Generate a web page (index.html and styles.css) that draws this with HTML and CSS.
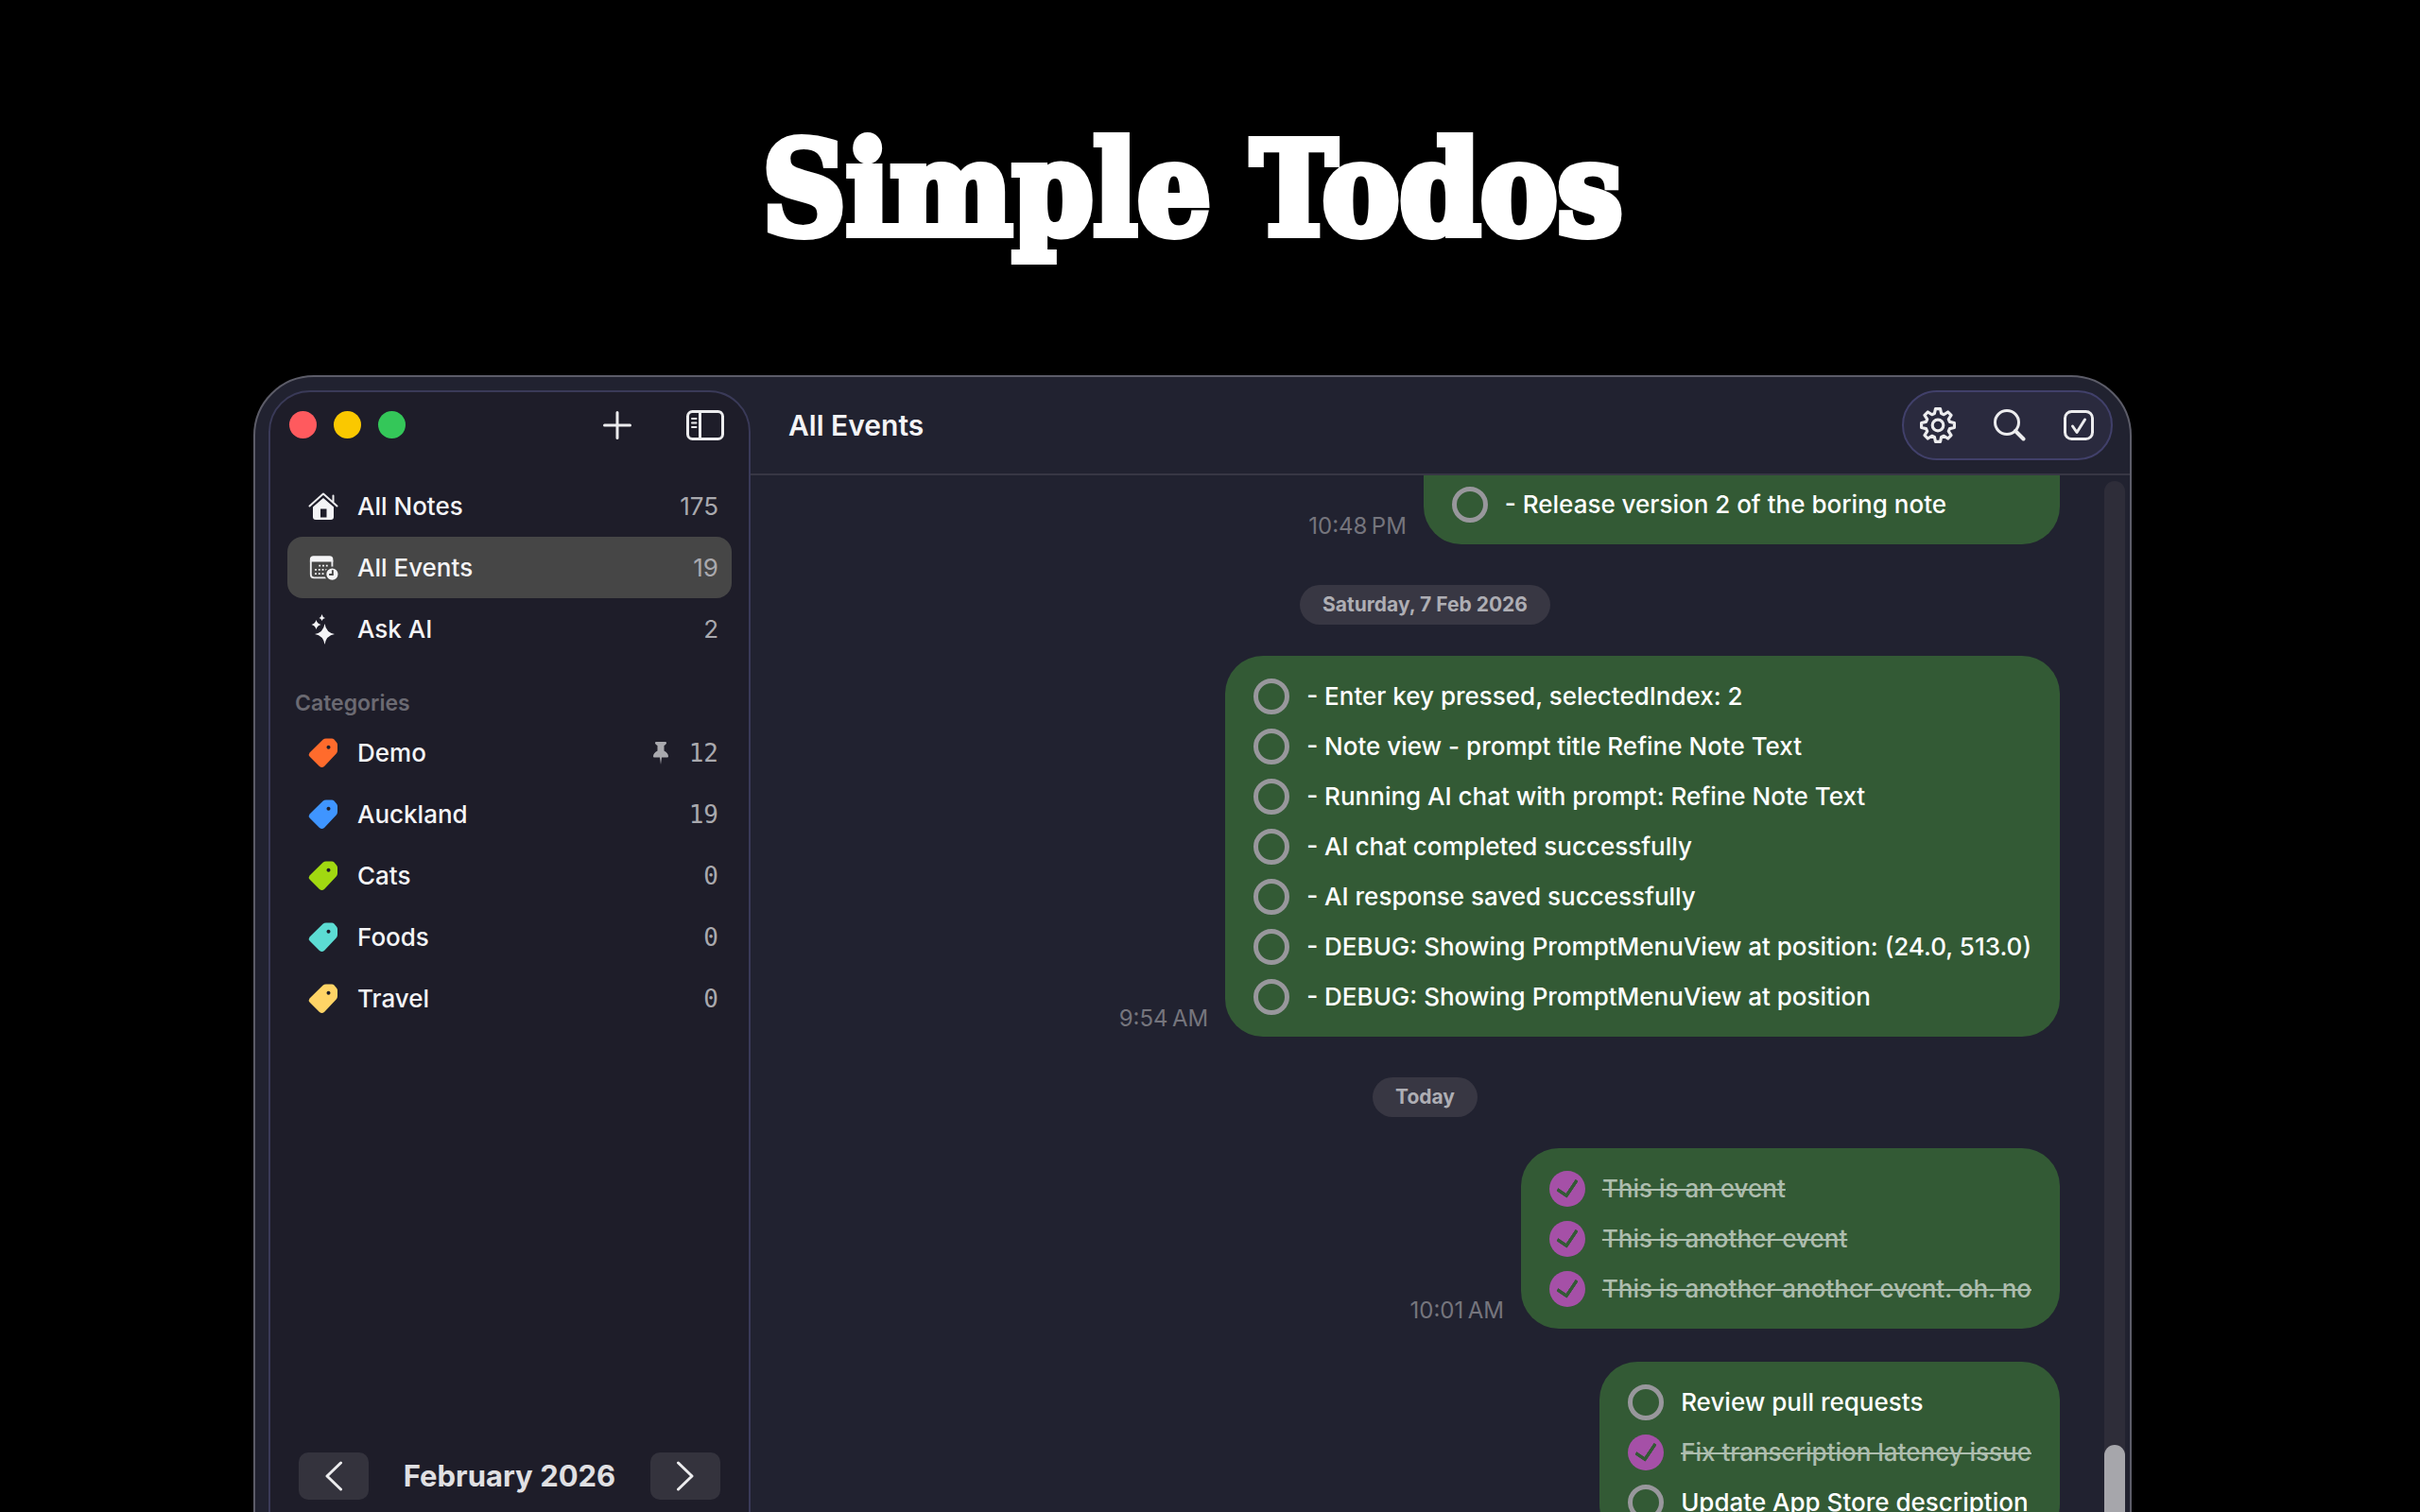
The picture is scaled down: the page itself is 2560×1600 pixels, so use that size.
FILE: index.html
```html
<!DOCTYPE html>
<html lang="en">
<head>
<meta charset="utf-8">
<title>Simple Todos</title>
<link rel="stylesheet" href="styles.css">
</head>
<body>
<svg class="sprite" aria-hidden="true">
  <symbol id="tag" viewBox="0 0 32 32"><path fill-rule="evenodd" d="M15.500 1.800Q17 .5 19 .5H25Q26.500 .5 27.500 1.500L30 4.500Q31 5.500 31 7V13Q31 15 29.700 16.500L17 30Q14.500 32 12 30L1.500 19.500Q0 17.500 1.500 15.500ZM21.500 7.800a2 2 0 1 0 .01 0Z"/></symbol>
</svg>
<header class="hero"><h1>Simple Todos</h1></header>
<div class="window">
  <aside class="sidebar">
    <div class="titlebar">
      <div class="lights"><button class="light red" aria-label="Close"></button><button class="light yellow" aria-label="Minimize"></button><button class="light green" aria-label="Zoom"></button></div>
      <div class="tools">
        <button aria-label="New note"><svg width="30" height="30" viewBox="0 0 30 30"><path class="line" d="M15 1.500V28.500M1.500 15H28.500"/></svg></button>
        <button aria-label="Toggle sidebar"><svg width="40" height="32" viewBox="0 0 40 32"><rect class="line" x="1.500" y="1.500" width="37" height="29" rx="5"/><path class="line" d="M14.500 2V30"/><path class="line thin" d="M6 9H10.500M6 13.500H10.500M6 18H10.500"/></svg></button>
      </div>
    </div>
    <nav>
      <ul class="list">
        <li><a href="#" class="row"><svg class="icon" viewBox="0 0 32 32"><path class="line thin" d="M1.500 15.500 16 2.500 30.500 15.500M26.500 11V4.500"/><path class="fill" fill-rule="evenodd" d="M5 16.500 16 7 27 16.500V27Q27 30 24 30H8Q5 30 5 27ZM13 18.500V27.500H19.500V18.500Z"/></svg><span>All Notes</span><b>175</b></a></li>
        <li><a href="#" class="row selected"><svg class="icon" viewBox="0 0 34 32"><path class="fill" d="M2 9V6.500Q2 2.500 6 2.500H24Q28 2.500 28 6.500V9Z"/><path class="line thin" d="M20 27H6.500Q3 27 3 23.500V8M27 8V15"/><path class="dots" d="M12 13.500H24M7.500 18H24M7.500 22.500H19"/><circle class="badge" cx="27" cy="23" r="7.500"/><path class="clock" d="M27.500 18.500V23.500H23.500"/></svg><span>All Events</span><b>19</b></a></li>
        <li><a href="#" class="row"><svg class="icon" viewBox="0 0 32 32"><path class="fill" d="M17.500 10Q19 19.500 28 21Q19 22.500 17.500 32Q16 22.500 7 21Q16 19.500 17.500 10ZM8.500 6Q9.500 10 13.500 11Q9.500 12 8.500 16Q7.500 12 3.500 11Q7.500 10 8.500 6ZM14.500 0Q15.200 3.300 18 4Q15.200 4.700 14.500 7Q13.800 4.700 11.500 4Q13.800 3.300 14.500 0Z"/></svg><span>Ask AI</span><b>2</b></a></li>
      </ul>
      <h2>Categories</h2>
      <ul class="list mono">
        <li><a href="#" class="row"><svg class="icon orange"><use href="#tag"/></svg><span>Demo</span><svg class="pin" width="16" height="24" viewBox="0 0 16 24"><path d="M2.500 0H13.500Q15 1.500 13 3L11.500 4V9.500Q16 12 16 15.500Q16 16.500 15 16.500H9L8 24 7 16.500H1Q0 16.500 0 15.500Q0 12 4.500 9.500V4L3 3Q1 1.500 2.500 0Z"/></svg><b>12</b></a></li>
        <li><a href="#" class="row"><svg class="icon blue"><use href="#tag"/></svg><span>Auckland</span><b>19</b></a></li>
        <li><a href="#" class="row"><svg class="icon lime"><use href="#tag"/></svg><span>Cats</span><b>0</b></a></li>
        <li><a href="#" class="row"><svg class="icon teal"><use href="#tag"/></svg><span>Foods</span><b>0</b></a></li>
        <li><a href="#" class="row"><svg class="icon sand"><use href="#tag"/></svg><span>Travel</span><b>0</b></a></li>
      </ul>
    </nav>
    <div class="month">
      <button aria-label="Previous month"><svg width="18" height="32" viewBox="0 0 18 32"><path class="line" d="M16.500 2 2 16 16.500 30"/></svg></button>
      <strong>February 2026</strong>
      <button aria-label="Next month"><svg width="18" height="32" viewBox="0 0 18 32"><path class="line" d="M1.500 2 16 16 1.500 30"/></svg></button>
    </div>
  </aside>
  <main>
    <header class="bar">
      <h2>All Events</h2>
      <div class="actions">
        <button aria-label="Settings"><svg width="38" height="38" viewBox="0 0 36 36"><path class="line" d="M15.600 1.500H20.400L21.400 6.200 24 7.300 28 4.700 31.300 8 28.700 12 29.800 14.600 34.500 15.600V20.400L29.800 21.400 28.700 24 31.300 28 28 31.300 24 28.700 21.400 29.800 20.400 34.500H15.600L14.600 29.800 12 28.700 8 31.300 4.700 28 7.300 24 6.200 21.400 1.500 20.400V15.600L6.200 14.600 7.300 12 4.700 8 8 4.700 12 7.300 14.600 6.200Z"/><circle class="line" cx="18" cy="18" r="5.500"/></svg></button>
        <button aria-label="Search"><svg width="34" height="34" viewBox="0 0 34 34"><circle class="line" cx="14" cy="14" r="12.500"/><path class="line thick" d="M23 23 31.500 31.500"/></svg></button>
        <button aria-label="Select"><svg width="32" height="32" viewBox="0 0 32 32"><rect class="line" x="1.500" y="1.500" width="29" height="29" rx="7"/><path class="line" d="M9.500 17 14 23.500 22.500 10"/></svg></button>
      </div>
    </header>
    <div class="body">
      <div class="chat">
        <section class="message">
          <time>10:48&#8201;PM</time>
          <ul class="bubble cut"><li><label><input type="checkbox"><span>- Release version 2 of the boring note</span></label></li></ul>
        </section>
        <p class="date">Saturday, 7 Feb 2026</p>
        <section class="message">
          <time>9:54&#8201;AM</time>
          <ul class="bubble">
            <li><label><input type="checkbox"><span>- Enter key pressed, selectedIndex: 2</span></label></li>
            <li><label><input type="checkbox"><span>- Note view - prompt title Refine Note Text</span></label></li>
            <li><label><input type="checkbox"><span>- Running AI chat with prompt: Refine Note Text</span></label></li>
            <li><label><input type="checkbox"><span>- AI chat completed successfully</span></label></li>
            <li><label><input type="checkbox"><span>- AI response saved successfully</span></label></li>
            <li><label><input type="checkbox"><span>- DEBUG: Showing PromptMenuView at position: (24.0, 513.0)</span></label></li>
            <li><label><input type="checkbox"><span>- DEBUG: Showing PromptMenuView at position</span></label></li>
          </ul>
        </section>
        <p class="date">Today</p>
        <section class="message">
          <time>10:01&#8201;AM</time>
          <ul class="bubble">
            <li><label><input type="checkbox" checked><span>This is an event</span></label></li>
            <li><label><input type="checkbox" checked><span>This is another event</span></label></li>
            <li><label><input type="checkbox" checked><span>This is another another event. oh. no</span></label></li>
          </ul>
        </section>
        <section class="message next">
          <ul class="bubble">
            <li><label><input type="checkbox"><span>Review pull requests</span></label></li>
            <li><label><input type="checkbox" checked><span>Fix transcription latency issue</span></label></li>
            <li><label><input type="checkbox"><span>Update App Store description</span></label></li>
          </ul>
        </section>
      </div>
      <div class="track"><div class="thumb"></div></div>
    </div>
  </main>
</div>
</body>
</html>
```

FILE: styles.css
```css
* { box-sizing: border-box; }
body {
  margin: 0;
  height: 100vh;
  padding: 0 305px 0 268px;
  overflow: hidden;
  display: flex;
  flex-direction: column;
  background: #000;
  color: #f4f4f6;
  font: 500 26px/32px Inter, "Liberation Sans", sans-serif;
}
h1, h2, p, ul { margin: 0; padding: 0; }
ul { list-style: none; }
a { color: inherit; text-decoration: none; }
button { padding: 0; border: 0; background: none; color: inherit; font: inherit; display: flex; align-items: center; justify-content: center; }
.sprite { position: absolute; width: 0; height: 0; }
.line { fill: none; stroke: #ececee; stroke-width: 3; stroke-linecap: round; stroke-linejoin: round; }
.thin { stroke-width: 2; }
.thick { stroke-width: 4; }
.dots { fill: none; stroke: #f4f4f6; stroke-width: 2; stroke-dasharray: 2 2; }
.fill { fill: #f4f4f6; }
.badge { fill: #f4f4f6; stroke: #464646; stroke-width: 2; }
.clock { fill: none; stroke: #464646; stroke-width: 2; }

.hero { flex: 0 0 397px; padding-top: 120px; text-align: center; color: #fff; }
h1 {
  font: 700 136px/160px "DejaVu Serif Condensed", "DejaVu Serif", serif;
  -webkit-text-stroke: 8px #fff;
}

.window {
  flex: 1 0 1300px;
  display: flex;
  padding: 14px 0 0 14px;
  border: 2px solid #5c5c68;
  border-radius: 64px;
  background: #212230;
  overflow: hidden;
}
.sidebar {
  flex: 0 0 510px;
  display: flex;
  flex-direction: column;
  padding: 0 18px;
  border: 2px solid #3a3a58;
  border-radius: 44px;
  background: #1e1d29;
}
.titlebar { display: flex; justify-content: space-between; align-items: center; height: 69px; padding: 0 8px 0 2px; }
.lights { display: flex; gap: 18px; }
.light { width: 29px; height: 29px; border-radius: 50%; }
.red { background: #ff5a5e; }
.yellow { background: #fac800; }
.green { background: #34c759; }
.tools { display: flex; gap: 58px; }
nav { padding-top: 19px; }
.row { display: flex; align-items: center; height: 65px; padding: 0 14px 0 22px; border-radius: 16px; }
.row.selected { background: #464646; }
.row span { flex: 1; }
.row b { font-weight: 400; color: #a9a9ae; }
.icon { width: 32px; height: 32px; margin-right: 20px; }
.pin { fill: #a9a9ae; margin-right: 22px; }
.mono b { font-family: "DejaVu Sans Mono", monospace; font-size: 26px; }
.orange { fill: #ff6b2c; }
.blue { fill: #3f95ff; }
.lime { fill: #a1d911; }
.teal { fill: #5cdcd3; }
.sand { fill: #ffd466; }
nav h2 { padding: 30px 8px 4px; font-size: 23px; line-height: 32px; font-weight: 600; color: #6b6a72; }
.month { display: flex; align-items: center; justify-content: space-between; margin-top: 448px; padding: 0 12px; }
.month button { width: 74px; height: 50px; border-radius: 10px; background: #34333d; }
.month strong { font-size: 31px; font-weight: 700; color: #e0e0e3; }

main { flex: 1; display: flex; flex-direction: column; min-width: 0; margin-top: -14px; }
.bar {
  flex: 0 0 104px;
  display: flex;
  align-items: center;
  justify-content: space-between;
  padding: 0 18px 0 40px;
  border-bottom: 2px solid #373744;
}
.bar h2 { font-size: 30px; line-height: 40px; font-weight: 600; }
.actions {
  display: flex;
  align-items: center;
  justify-content: space-between;
  width: 223px;
  height: 74px;
  padding: 0 18px 0 17px;
  border: 2px solid #41406a;
  border-radius: 37px;
  background: #2a2a3e;
}
.body { flex: 1; display: flex; min-height: 0; overflow: hidden; }
.chat { flex: 1; padding-right: 5px; }
.message { display: flex; justify-content: flex-end; align-items: flex-end; gap: 18px; padding-right: 42px; }
.message.next { margin-top: 35px; }
time { padding-bottom: 3px; font-size: 24px; font-weight: 400; color: #75757d; }
.bubble { padding: 16px 30px; border-radius: 40px; background: #335a35; color: #fff; }
.bubble.cut { padding-top: 4px; padding-right: 120px; border-radius: 0 0 40px 40px; }
.bubble label { display: flex; align-items: center; gap: 18px; height: 53px; }
.bubble input {
  appearance: none;
  width: 38px;
  height: 38px;
  margin: 0;
  border: 5px solid #98979c;
  border-radius: 50%;
}
.bubble input:checked { display: grid; place-items: center; border: 0; background: #a550a7; }
.bubble input:checked::before {
  content: "";
  width: 10px;
  height: 18px;
  margin-top: -5px;
  border: solid #335a35;
  border-width: 0 4px 4px 0;
  border-radius: 2px;
  rotate: 34deg;
}
.bubble input:checked + span { color: #adbdae; text-decoration: line-through 2px; }
.date {
  width: fit-content;
  margin: 43px auto 33px;
  padding: 5px 24px;
  border-radius: 21px;
  background: #383743;
  color: #aeaeb4;
  font-size: 21px;
  font-weight: 700;
}
.track { flex: 0 0 22px; margin: 6px 5px 0 0; padding-top: 1020px; border-radius: 11px; background: #2e2d39; }
.thumb { height: 300px; border-radius: 11px; background: #a6a6ab; }
```
